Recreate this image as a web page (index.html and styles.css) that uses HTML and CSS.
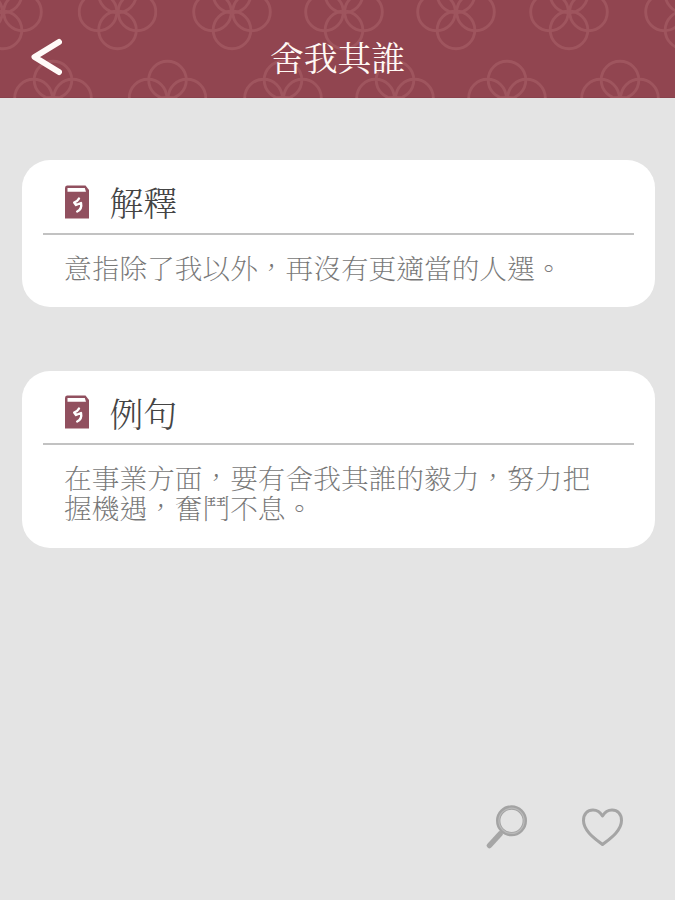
FILE: index.html
```html
<!DOCTYPE html>
<html lang="zh-Hant">
<head>
<meta charset="utf-8">
<title>舍我其誰</title>
<link rel="stylesheet" href="styles.css">
</head>
<body>
<svg class="defs" aria-hidden="true">
  <symbol id="book" viewBox="0 0 26 34">
    <path d="M3 .5H21.500L25 5V33.500H1V3Q1 .5 3 .5Z" fill="#91505f"/>
    <path d="M3.500 3H20.800L22 6.800H3.500Z" fill="#fff"/>
    <path d="M15 13.500Q13.800 16 10.200 17.500L12 20L17 18Q18.300 24 13.200 26.500" fill="none" stroke="#fff" stroke-width="2.400" stroke-linecap="round" stroke-linejoin="round"/>
  </symbol>
  <symbol id="flower" viewBox="-40 -40 80 80">
    <g fill="none" stroke="#9f555e" stroke-width="2.900">
      <circle cx="0" cy="-18" r="18.800"/><circle cx="0" cy="18" r="18.800"/>
      <circle cx="-19.500" cy="0" r="18.800"/><circle cx="19.500" cy="0" r="18.800"/>
    </g>
  </symbol>
</svg>
<div class="screen">
  <header class="header">
    <svg class="pattern" viewBox="0 0 675 98" aria-hidden="true">
      <use href="#flower" x="-37" y="-28" width="80" height="80"/>
      <use href="#flower" x="77.500" y="-28" width="80" height="80"/>
      <use href="#flower" x="192" y="-28" width="80" height="80"/>
      <use href="#flower" x="304" y="-28" width="80" height="80"/>
      <use href="#flower" x="416" y="-28" width="80" height="80"/>
      <use href="#flower" x="529" y="-28" width="80" height="80"/>
      <use href="#flower" x="644" y="-28" width="80" height="80"/>
      <use href="#flower" x="13" y="58" width="80" height="80"/>
      <use href="#flower" x="127.500" y="58" width="80" height="80"/>
      <use href="#flower" x="243" y="58" width="80" height="80"/>
      <use href="#flower" x="355" y="58" width="80" height="80"/>
      <use href="#flower" x="467" y="58" width="80" height="80"/>
      <use href="#flower" x="580" y="58" width="80" height="80"/>
    </svg>
    <svg class="back" viewBox="0 0 32 38"><path d="M29 4L4.500 19L29 34" fill="none" stroke="#fffaf8" stroke-width="6" stroke-linecap="round" stroke-linejoin="round"/></svg>
    <h1 class="title">舍我其誰</h1>
  </header>
  <main class="content">
    <section class="card">
      <div class="card-head"><svg class="book"><use href="#book"/></svg><h2 class="heading">解釋</h2></div>
      <p class="text">意指除了我以外，再沒有更適當的人選。</p>
    </section>
    <section class="card card-example">
      <div class="card-head"><svg class="book"><use href="#book"/></svg><h2 class="heading">例句</h2></div>
      <p class="text">在事業方面，要有舍我其誰的毅力，努力把<br>握機遇，奮鬥不息。</p>
    </section>
  </main>
  <footer class="actions">
    <svg class="action" viewBox="0 0 44 44">
      <path d="M15 29L4.500 40.500" stroke="#a6a6a6" stroke-width="5.500" stroke-linecap="round"/>
      <circle cx="26.500" cy="15.800" r="13.300" fill="none" stroke="#a3a3a3" stroke-width="4.400"/>
      <circle cx="26.500" cy="15.800" r="12.600" fill="none" stroke="#bababa" stroke-width="1.200"/>
    </svg>
    <svg class="action" viewBox="0 0 44 44">
      <path d="M21.500 39.500C14.500 34 2.500 26 2.500 15.500C2.500 9 6.500 5 12 5C16.500 5 19.500 7.500 21.500 11C23.500 7.500 26.500 5 31 5C36.500 5 40.500 9 40.500 15.500C40.500 26 28.500 34 21.500 39.500Z" fill="none" stroke="#a5a5a5" stroke-width="3" stroke-linejoin="round"/>
    </svg>
  </footer>
</div>
</body>
</html>
```
FILE: styles.css
```css
* {
  box-sizing: border-box;
}

body {
  margin: 0;
  background: #e4e4e4;
  font-family: "Noto Serif CJK TC", "Noto Sans CJK TC", serif;
}

.defs {
  display: block;
  width: 0;
  height: 0;
}

.screen {
  display: flex;
  flex-direction: column;
  width: 675px;
  height: 900px;
  overflow: hidden;
}

.header {
  position: relative;
  display: grid;
  grid-template-columns: 1fr auto 1fr;
  align-items: center;
  flex: none;
  height: 98px;
  padding: 16px 0 0;
  background: #914550;
  border-bottom: 1px solid #89414c;
}

.pattern {
  position: absolute;
  inset: 0;
  width: 675px;
  height: 98px;
}

.back {
  position: relative;
  width: 32px;
  height: 38px;
  margin-left: 30px;
}

.title {
  position: relative;
  margin: 0;
  color: #fff8f4;
  font-size: 33.8px;
  font-weight: 400;
  line-height: 44px;
}

.content {
  display: flex;
  flex-direction: column;
  flex: 1;
  gap: 64px;
  padding: 62px 20.5px 0 21.5px;
}

.card {
  height: 146.5px;
  padding: 0 21px;
  background: #fff;
  border-radius: 28px;
}

.card-example {
  height: 177px;
}

.card-head {
  display: flex;
  align-items: center;
  gap: 20px;
  height: 74.5px;
  padding: 12px 0 0 21px;
  border-bottom: 2px solid #c2c2c2;
}

.book {
  width: 26px;
  height: 34px;
  margin-top: -1px;
}

.heading {
  margin: 0;
  color: #444;
  font-size: 33.8px;
  font-weight: 300;
  line-height: 44px;
}

.text {
  margin: 0;
  padding: 17px 0 0 21.5px;
  color: #777;
  font-size: 27.7px;
  font-weight: 100;
  line-height: 30px;
  white-space: nowrap;
}

.actions {
  display: flex;
  justify-content: flex-end;
  gap: 52px;
  padding: 0 50px 51px 0;
}

.action {
  width: 44px;
  height: 44px;
}
```
